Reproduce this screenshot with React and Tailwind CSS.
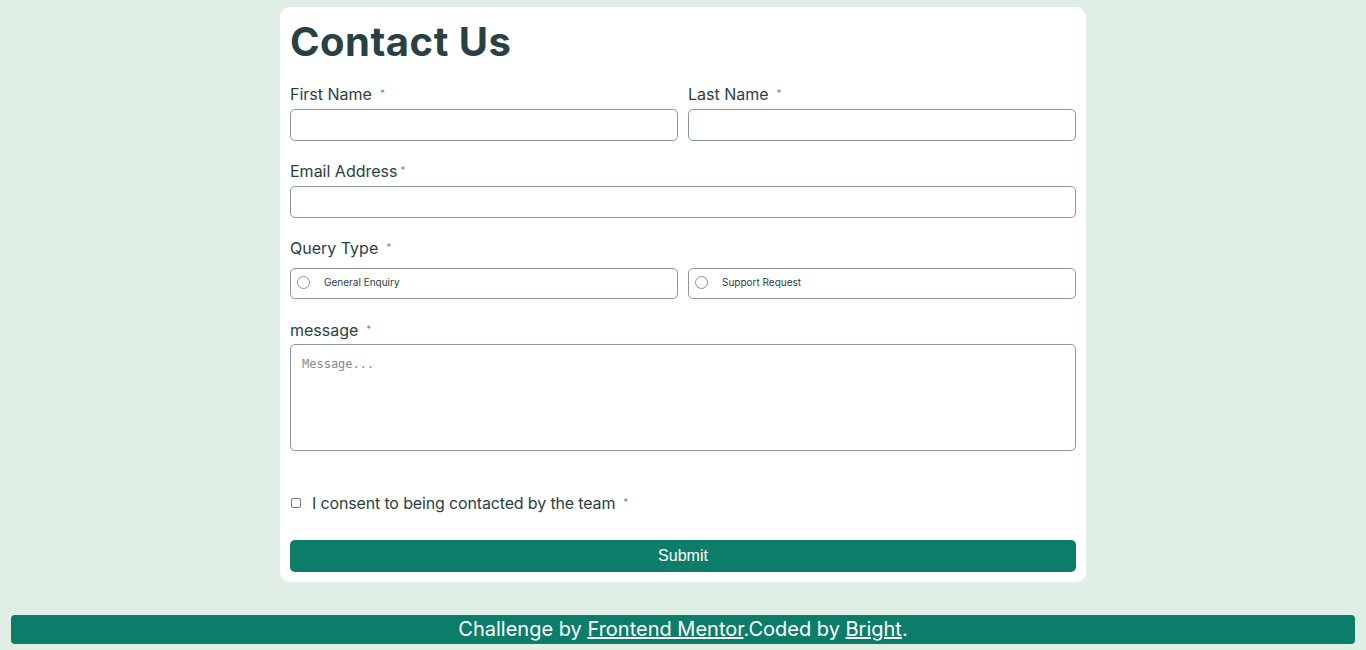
import React from "react";

const Star = () => (
  <span className="text-[#5f9c8f] text-[10px] align-top ml-2 relative top-[-1px]">*</span>
);

function Label({ children, className = "" }) {
  return (
    <div className={`h-5 leading-5 text-[16px] text-[#2a4144] ${className}`}>{children}</div>
  );
}

export default function App() {
  const font = { fontFamily: "Inter, 'Noto Sans', sans-serif" };
  return (
    <div className="min-h-[650px] bg-[#dfefe6] pt-[7px] pb-[6px]" style={font}>
      <div className="w-[806px] mx-auto bg-white rounded-[10px] p-[10px]">
        <h1 className="pt-[1px] text-[40px] leading-[48px] font-bold text-[#2a4144] tracking-[0.5px]">Contact Us</h1>

        <div className="grid grid-cols-2 gap-x-[10px] mt-[18px]">
          <div>
            <Label>First Name<Star /></Label>
            <div className="mt-[5px] h-[32px] border border-[#8a9797] rounded-[5px]" />
          </div>
          <div>
            <Label>Last Name<Star /></Label>
            <div className="mt-[5px] h-[32px] border border-[#8a9797] rounded-[5px]" />
          </div>
        </div>

        <div className="mt-[20px]">
          <Label>Email Address<span className="text-[#5f9c8f] text-[10px] align-top ml-[3px] relative top-[-1px]">*</span></Label>
          <div className="mt-[5px] h-[32px] border border-[#8a9797] rounded-[5px]" />
        </div>

        <div className="mt-[20px]">
          <Label>Query Type<Star /></Label>
          <div className="grid grid-cols-2 gap-x-[10px] mt-[10px]">
            {["General Enquiry", "Support Request"].map((t) => (
              <div key={t} className="h-[31px] border border-[#8a9797] rounded-[5px] flex items-center pl-[6px] pb-[3px]">
                <span className="w-[13px] h-[13px] rounded-full border border-[#8f8f8f] bg-white" />
                <span className="ml-[14px] text-[10px] text-[#2a4144]">{t}</span>
              </div>
            ))}
          </div>
        </div>

        <div className="mt-[21px]">
          <Label>message<Star /></Label>
          <div className="mt-[4px] h-[107px] border border-[#8a9797] rounded-[5px] px-[11px] pt-[5px]">
            <span className="text-[12px] leading-[16px] text-[#8a8a8a]" style={{ fontFamily: "'DejaVu Sans Mono', monospace" }}>Message...</span>
          </div>
        </div>

        <div className="mt-[42px] h-5 flex items-center">
          <span className="ml-[1px] w-[10px] h-[10px] border border-[#767676] rounded-[2px] bg-white" />
          <span className="ml-[11px] text-[16px] leading-5 text-[#2a4144] tracking-[-0.15px]">I consent to being contacted by the team<Star /></span>
        </div>

        <button className="mt-[27px] w-full h-[32px] bg-[#0c7d69] rounded-[5px] text-white text-[16px]" style={{ fontFamily: "'Liberation Sans', Arial, sans-serif" }}>Submit</button>
      </div>

      <div className="mx-[11px] mt-[33px] h-[29px] bg-[#0c7d69] rounded-[4px] flex items-center justify-center text-white text-[20px] leading-[29px]">
        <span>Challenge by <span className="underline">Frontend Mentor</span>.Coded by <span className="underline">Bright</span>.</span>
      </div>
    </div>
  );
}
